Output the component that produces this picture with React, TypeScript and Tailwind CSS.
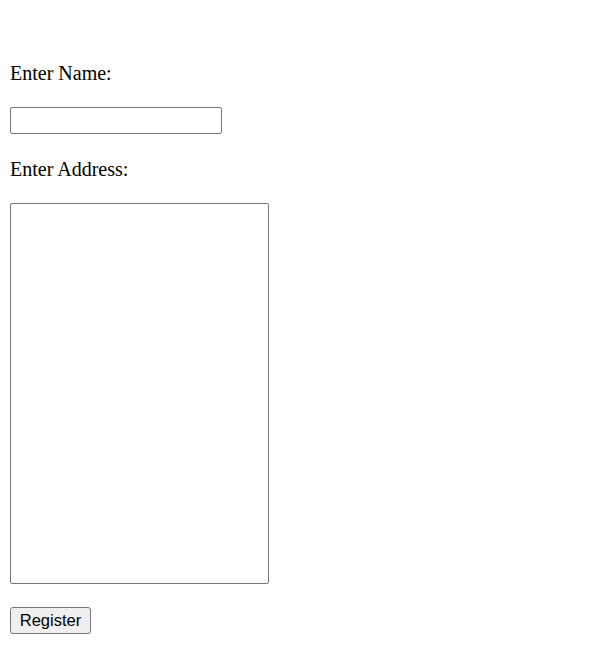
export default function App() {
  return (
    <div className="min-h-[655px] bg-white pl-[10px] pt-[62px] font-['Liberation_Serif',serif] text-[20px] leading-[22px] text-black">
      <form className="flex flex-col items-start" onSubmit={(e) => e.preventDefault()}>
        <label htmlFor="name">Enter Name:</label>
        <input
          id="name"
          type="text"
          className="mt-[23px] h-[27px] w-[212px] rounded-[2px] border border-[#767676] bg-white px-[2px] font-['Liberation_Sans',sans-serif] text-[16px]"
        />
        <label htmlFor="address" className="mt-[24px]">
          Enter Address:
        </label>
        <textarea
          id="address"
          className="mt-[23px] h-[381px] w-[259px] resize-none rounded-[2px] border border-[#767676] bg-white font-['Liberation_Mono',monospace] text-[16px]"
        />
        <button
          type="submit"
          className="mt-[23px] h-[27px] w-[81px] rounded-[3px] border border-[#767676] bg-[#efefef] font-['Liberation_Sans',sans-serif] text-[16.5px] leading-none text-black"
        >
          Register
        </button>
      </form>
    </div>
  );
}
